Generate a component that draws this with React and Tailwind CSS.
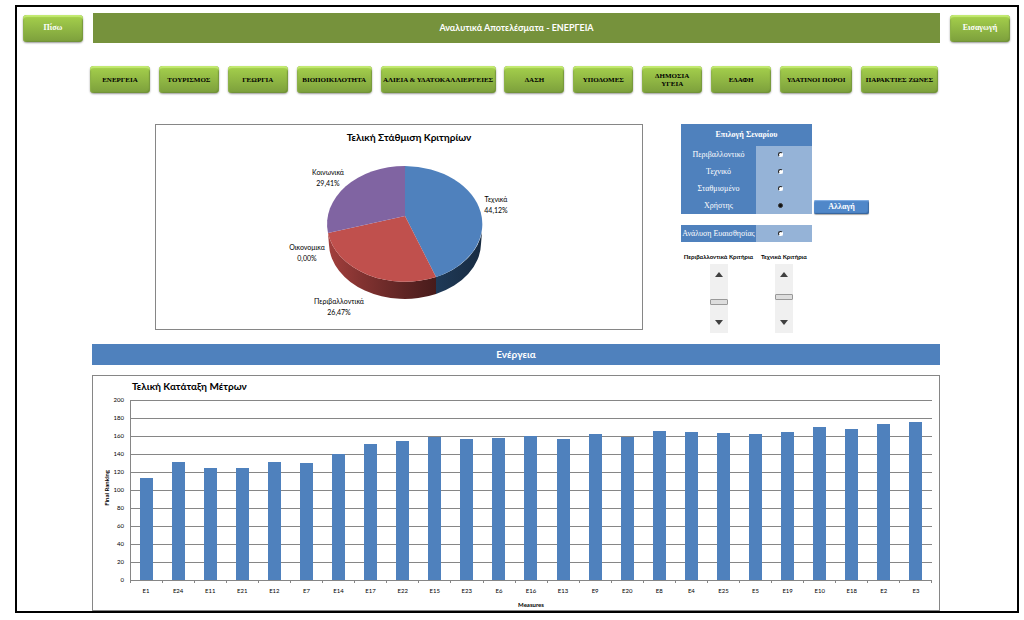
import { useState } from "react";

const SECTORS = [
  { label: "ΕΝΕΡΓΕΙΑ", width: "w-[60px]" },
  { label: "ΤΟΥΡΙΣΜΟΣ", width: "w-[60px]" },
  { label: "ΓΕΩΡΓΙΑ", width: "w-[60px]" },
  { label: "ΒΙΟΠΟΙΚΙΛΟΤΗΤΑ", width: "w-[75px]" },
  { label: "ΑΛΙΕΙΑ & ΥΔΑΤΟΚΑΛΛΙΕΡΓΕΙΕΣ", width: "w-[115px]" },
  { label: "ΔΑΣΗ", width: "w-[60px]" },
  { label: "ΥΠΟΔΟΜΕΣ", width: "w-[60px]" },
  { label: "ΔΗΜΟΣΙΑ ΥΓΕΙΑ", width: "w-[60px]", wrap: true },
  { label: "ΕΔΑΦΗ", width: "w-[60px]" },
  { label: "ΥΔΑΤΙΝΟΙ ΠΟΡΟΙ", width: "w-[72px]" },
  { label: "ΠΑΡΑΚΤΙΕΣ ΖΩΝΕΣ", width: "w-[77px]" },
];

const MEASURES = [
  ["E1", 113], ["E24", 131], ["E11", 124], ["E21", 125], ["E12", 131],
  ["E7", 130], ["E14", 140], ["E17", 151], ["E22", 154], ["E15", 159],
  ["E23", 157], ["E6", 158], ["E16", 160], ["E13", 157], ["E9", 162],
  ["E20", 159], ["E8", 166], ["E4", 164], ["E25", 163], ["E5", 162],
  ["E19", 164], ["E10", 170], ["E18", 168], ["E2", 173], ["E3", 176],
];

const TICKS = [200, 180, 160, 140, 120, 100, 80, 60, 40, 20, 0];
const SCENARIOS = ["Περιβαλλοντικό", "Τεχνικό", "Σταθμισμένο", "Χρήστης"];

const SERIF = "font-['Liberation_Serif',serif]";

function GreenButton({ children, className }) {
  return (
    <button
      type="button"
      className={`flex h-[27px] shrink-0 items-center justify-center rounded-[4px] bg-linear-to-b from-[#a6d14c] to-[#7c9f3c] text-center font-bold shadow-[inset_0_2px_1px_#c3ea72,inset_1px_0_1px_#88ab45,inset_-1px_-1px_1px_#6f8f38,0_1px_2px_#00000066] ${SERIF} ${className}`}
    >
      {children}
    </button>
  );
}

function Radio({ label, checked, onSelect }) {
  return (
    <label className="grid h-[17px] grid-cols-[75px_1fr] items-center text-center text-[8px] leading-[17px] text-white">
      <span className="whitespace-nowrap">{label}</span>
      <span className="flex h-full items-center bg-[#95b3d7] pl-[22px]">
        <input
          type="radio"
          name="scenario"
          checked={checked}
          onChange={onSelect}
          className="size-[5px] appearance-none rounded-full border border-r-white border-b-white border-l-[#222222] border-t-[#222222] bg-white checked:border-[#333333] checked:bg-[#111111]"
        />
      </span>
    </label>
  );
}

function Spinner({ label, initial }) {
  const [value, setValue] = useState(initial);
  const step = (d) => setValue((v) => Math.min(100, Math.max(0, v + d)));
  return (
    <div className="flex w-[18px] flex-col items-center bg-[#f0f0f0]">
      <button type="button" aria-label={`${label} -`} onClick={() => step(-5)} className="flex h-[21px] w-full items-center justify-center">
        <svg viewBox="0 0 8 5" className="h-[5px] w-[8px]"><path d="M0 5 4 0l4 5Z" fill="#404040" /></svg>
      </button>
      <input
        type="range"
        aria-label={label}
        value={value}
        onChange={(e) => setValue(Number(e.target.value))}
        className="h-[27px] w-[18px] appearance-none bg-transparent [writing-mode:vertical-lr] [&::-webkit-slider-thumb]:h-[6px] [&::-webkit-slider-thumb]:w-[18px] [&::-webkit-slider-thumb]:appearance-none [&::-webkit-slider-thumb]:rounded-[1px] [&::-webkit-slider-thumb]:border [&::-webkit-slider-thumb]:border-[#999999] [&::-webkit-slider-thumb]:bg-[#dddddd]"
      />
      <button type="button" aria-label={`${label} +`} onClick={() => step(5)} className="flex h-[21px] w-full items-center justify-center">
        <svg viewBox="0 0 8 5" className="h-[5px] w-[8px]"><path d="M0 0h8L4 5Z" fill="#404040" /></svg>
      </button>
    </div>
  );
}

function PieLabel({ x, y, name, value }) {
  return (
    <text x={x} y={y} textAnchor="middle" className="text-[7px]">
      <tspan x={x}>{name}</tspan>
      <tspan x={x} dy="11">{value}</tspan>
    </text>
  );
}

function WeightsChart() {
  return (
    <section className="min-w-0 flex-1 border border-[#868686]">
      <h2 className="pl-[20px] text-center text-[10px] leading-[24px] font-bold text-black">Τελική Στάθμιση Κριτηρίων</h2>
      <svg viewBox="0 0 486 180" className="block h-[180px] w-full">
        <defs>
          <linearGradient id="redSide" x1="0" x2="1">
            <stop offset="0" stopColor="#a33f3d" />
            <stop offset="0.3" stopColor="#833331" />
            <stop offset="0.7" stopColor="#5f2524" />
            <stop offset="1" stopColor="#471b1b" />
          </linearGradient>
          <linearGradient id="blueSide" x1="0" x2="1">
            <stop offset="0" stopColor="#1f3a58" />
            <stop offset="1" stopColor="#182b41" />
          </linearGradient>
        </defs>
        <path d="M172 84A78 58 0 0 0 280 128V145A76 56 0 0 1 173 96Z" fill="url(#redSide)" />
        <path d="M280 128A78 58 0 0 0 326 83L325 95A76 56 0 0 1 280 145Z" fill="url(#blueSide)" />
        <path d="M249 67V17A78 58 0 0 1 280 128Z" fill="#4f81bd" />
        <path d="M249 67 280 128A78 58 0 0 1 172 84Z" fill="#c0504d" />
        <path d="M249 67 172 84A78 58 0 0 1 249 17Z" fill="#8064a2" />
        <PieLabel x={340} y={53} name="Τεχνικά" value="44,12%" />
        <PieLabel x={172} y={26} name="Κοινωνικά" value="29,41%" />
        <PieLabel x={151} y={101} name="Οικονομικα" value="0,00%" />
        <PieLabel x={183} y={155} name="Περιβαλλοντικά" value="26,47%" />
      </svg>
    </section>
  );
}

function RankingChart() {
  return (
    <section className="mt-[10px] border border-[#868686] pr-[7px]">
      <h2 className="pl-[39px] text-[10px] leading-[20px] font-bold text-black">Τελική Κατάταξη Μέτρων</h2>
      <div className="grid grid-cols-[18px_13px_6px_1fr] text-[6px] text-black">
        <div className="flex h-[180px] items-center justify-end pt-[4px]">
          <span className="rotate-180 leading-[8px] font-bold whitespace-nowrap [writing-mode:vertical-rl]">Final Ranking</span>
        </div>
        <div className="-mt-[5px] text-right leading-[18px]">
          {TICKS.map((t) => (
            <div key={t}>{t}</div>
          ))}
        </div>
        <div />
        <div className="pt-[4px]">
          <div className="grid">
            <div className="border-b border-l border-[#868686] [grid-area:1/1]">
              {TICKS.slice(1).map((t) => (
                <div key={t} className="h-[18px] border-t border-[#868686]" />
              ))}
            </div>
            <div className="flex h-[180px] [grid-area:1/1]">
              {MEASURES.map(([name, value]) => (
                <div key={name} className="flex flex-1 items-end justify-center">
                  <div className="w-[13px] bg-[#4f81bd]" style={{ height: `${value / 2}%` }} />
                </div>
              ))}
            </div>
          </div>
          <div className="flex border-r border-[#868686]">
            {MEASURES.map(([name]) => (
              <div key={name} className="h-[2px] flex-1 border-l border-[#868686]" />
            ))}
          </div>
          <div className="flex pt-[2px] text-center leading-[12px]">
            {MEASURES.map(([name]) => (
              <span key={name} className="flex-1">{name}</span>
            ))}
          </div>
          <div className="pt-[3px] text-center leading-[10px] font-bold">Measures</div>
        </div>
      </div>
    </section>
  );
}

export default function App() {
  const [scenario, setScenario] = useState("Χρήστης");
  return (
    <div className="bg-white pt-[5px] pr-[5px] pb-[7px] pl-[15px] font-['Lato','Open_Sans',sans-serif]">
      <main className="border-2 border-black">
        <header className="flex items-center gap-[10px] pt-[6px] pr-[7px] pl-[6px]">
          <GreenButton className="w-[60px] text-[8px] text-white">Πίσω</GreenButton>
          <h1 className="flex h-[30px] flex-1 items-center justify-center bg-[#76923c] text-[9px] font-bold text-white">
            Αναλυτικά Αποτελέσματα - ΕΝΕΡΓΕΙΑ
          </h1>
          <GreenButton className="w-[60px] text-[8px] text-white">Εισαγωγή</GreenButton>
        </header>

        <nav className="mt-[23px] flex justify-between pr-[79px] pl-[73px]">
          {SECTORS.map((s) => (
            <GreenButton
              key={s.label}
              className={`text-[7px] leading-[8px] text-black ${s.width} ${s.wrap ? "px-[8px]" : "whitespace-nowrap"}`}
            >
              {s.label}
            </GreenButton>
          ))}
        </nav>

        <div className="mt-[31px] flex items-start pr-[148px] pl-[138px]">
          <WeightsChart />
          <div className="ml-[38px] w-[188px]">
            <div className="flex items-end gap-[2px]">
              <fieldset className={`w-[131px] bg-[#4f81bd] ${SERIF}`}>
                <legend className="float-left w-full text-center text-[8px] leading-[22px] font-bold text-white">Επιλογή Σεναρίου</legend>
                <div className="clear-both">
                  {SCENARIOS.map((s) => (
                    <Radio key={s} label={s} checked={scenario === s} onSelect={() => setScenario(s)} />
                  ))}
                </div>
              </fieldset>
              <button
                type="button"
                className={`h-[14px] w-[55px] rounded-[2px] bg-[#4f87c9] text-[8px] leading-[14px] font-bold text-white shadow-[inset_0_1px_1px_#86b2e6,inset_-1px_-1px_1px_#35639b,0_1px_1px_#00000055] ${SERIF}`}
              >
                Αλλαγή
              </button>
            </div>
            <div className={`mt-[11px] w-[131px] bg-[#4f81bd] ${SERIF}`}>
              <Radio label="Ανάλυση Ευαισθησίας" checked={scenario === "sensitivity"} onSelect={() => setScenario("sensitivity")} />
            </div>
            <div className="mt-[9px] grid w-[131px] grid-cols-[75px_56px] justify-items-center gap-y-[1px] text-[6px] leading-[12px] font-bold whitespace-nowrap text-black">
              <span>Περιβαλλοντικά Κριτήρια</span>
              <span>Τεχνικά Κριτήρια</span>
              <Spinner label="Περιβαλλοντικά Κριτήρια" initial={65} />
              <Spinner label="Τεχνικά Κριτήρια" initial={42} />
            </div>
          </div>
        </div>

        <div className="mt-[11px] pr-[77px] pl-[75px]">
          <h2 className="bg-[#4f81bd] text-center text-[10px] leading-[21px] font-bold text-white">Ενέργεια</h2>
          <RankingChart />
        </div>
      </main>
    </div>
  );
}
